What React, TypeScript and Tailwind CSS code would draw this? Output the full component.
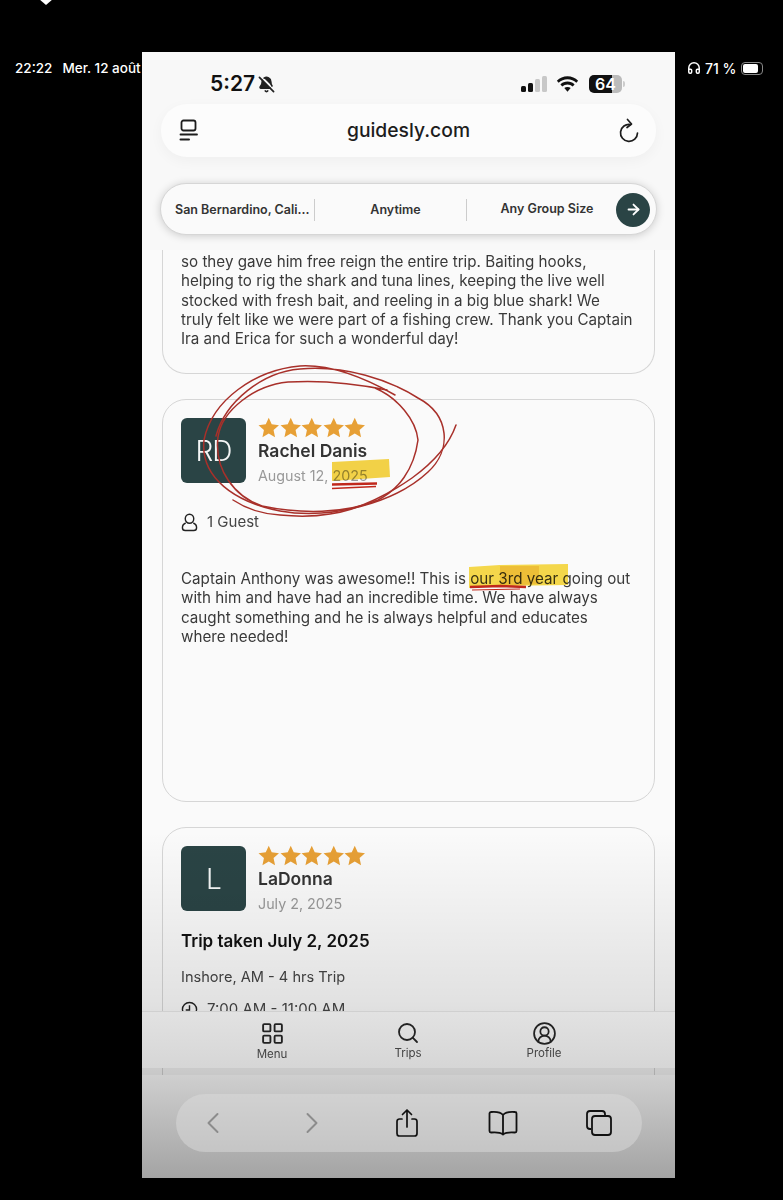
import React from "react";
import { LayoutGrid, Search, CircleUserRound, ChevronLeft, ChevronRight, ArrowRight, BellOff, Headphones } from "lucide-react";

const Star = () => (
  <svg viewBox="0 0 24 24" className="w-[21.5px] h-[21px] shrink-0" fill="#e7a036">
    <path d="M12 .8l3.4 7.6 8.3.9-6.2 5.6 1.7 8.2L12 18.9l-7.2 4.2 1.7-8.2L.3 9.3l8.3-.9z" />
  </svg>
);

const Stars = () => (
  <div className="flex h-[18px] items-center">
    {[0, 1, 2, 3, 4].map((i) => (
      <Star key={i} />
    ))}
  </div>
);

const ReviewHead = ({ initials, name, date }: { initials: string; name: string; date: string }) => (
  <div className="flex gap-[12px]">
    <div className="w-[65px] h-[65px] rounded-[6px] bg-[#2a4445] text-[#f4f6f6] text-[28px] font-light flex items-center justify-center tracking-[-1px]">
      {initials}
    </div>
    <div className="flex flex-col">
      <Stars />
      <div className="mt-[2px] h-[25px] leading-[25px] text-[17.5px] font-semibold text-[#333]">{name}</div>
      <div className="h-[25px] leading-[25px] text-[14.3px] text-[#999]">{date}</div>
    </div>
  </div>
);

const Body = "text-[15.2px] leading-[19.3px] text-[#3a3a3a]";

function Annotations() {
  return (
    <svg viewBox="142 52 533 1126" className="absolute inset-0 w-full h-full pointer-events-none" fill="none">
      <g style={{ mixBlendMode: "multiply" }}>
        <path d="M332 462 L389 459 L390 477 L332 481 Z" fill="#f7d648" />
        <path d="M469 567 L500 565 L568 564 L568 585 L500 586 L469 588 Z" fill="#f9dc4c" />
        <path d="M500 566 L539 566 L539 584 L500 586 Z" fill="#f2c238" />
      </g>
      <path d="M332 484.500 L377 483.500" stroke="#c0281c" strokeWidth="2.600" />
      <path d="M332 488.500 L376 486.500" stroke="#c0281c" strokeWidth="1.600" />
      <path d="M470 587 L500 586 L526 587" stroke="#c0281c" strokeWidth="2.600" />
      <path d="M472 590 L520 589" stroke="#c0281c" strokeWidth="1.200" />
      <g stroke="#a8302a" strokeWidth="1.500" strokeLinecap="round">
        <path d="M395 395 C372 382 335 364 300 366 C255 370 212 400 204 440 C200 478 235 502 280 511 C330 520 395 503 428 472 C452 450 450 415 418 398 C390 380 345 365 300 369 C262 372 225 402 216 436" />
        <path d="M387 390 C358 384 320 380 288 382 C255 385 222 410 218 437 C214 470 235 497 262 506 C300 514 345 514 378 500 C398 490 414 470 418 440 C416 420 398 398 375 388" />
        <path d="M233 500 C248 510 262 514 280 515 C300 517 318 516 330 514 C360 510 392 492 412 478 C430 465 448 448 456 425" />
      </g>
    </svg>
  );
}

export default function App() {
  return (
    <div className="relative w-[783px] h-[1200px] bg-black overflow-hidden pt-[52px] pl-[142px]" style={{ fontFamily: "Inter, 'Liberation Sans', sans-serif" }}>
      {/* tablet status bar, behind the recording */}
      <div className="absolute left-[15px] top-[60px] h-4 flex items-center gap-[10px] text-white text-[13.5px] font-medium whitespace-nowrap">
        <span>22:22</span>
        <span>Mer. 12 août</span>
      </div>
      <div className="absolute left-[678px] top-[60px] h-4 flex items-center text-white text-[14px] font-medium whitespace-nowrap">
        <Headphones size={14} strokeWidth={2.500} className="ml-[9px]" />
        <span className="ml-[4px]">71 %</span>
        <span className="ml-[5px] w-[22px] h-[13px] rounded-[4px] border border-[#888] p-[1px] flex">
          <span className="w-[15px] rounded-[2px] bg-white" />
        </span>
      </div>
      <svg viewBox="0 0 14 6" className="absolute left-[40px] top-0 w-[12px] h-[5px]" fill="#fff">
        <path d="M0 0H14L7 6Z" />
      </svg>

      <div className="relative z-10 w-[533px] h-[1126px] bg-[#fafafa] overflow-hidden">
        {/* header */}
        <div className="relative z-10 h-[198px] bg-[#f8f8f8] px-[19px] flex flex-col">
          <div className="h-[32px] flex items-center pt-[32px] pl-[49px] pr-[31px] justify-between">
            <div className="flex items-center gap-[3px]">
              <span className="text-[21px] font-semibold text-[#111]">5:27</span>
              <BellOff size={17} strokeWidth={2.400} fill="#222" className="text-[#222]" />
            </div>
            <div className="flex items-center">
              <svg viewBox="0 0 27 18" className="w-[27px] h-[18px]">
                <rect x="0" y="11" width="5" height="6" rx="1.500" fill="#111" />
                <rect x="7" y="8" width="5" height="9" rx="1.500" fill="#111" />
                <rect x="14" y="4" width="5" height="13" rx="1.500" fill="#c8c8c8" />
                <rect x="21" y="1" width="5" height="16" rx="1.500" fill="#c8c8c8" />
              </svg>
              <svg viewBox="0 0 24 18" className="w-[23px] h-[18px] ml-[8px]" fill="#111">
                <path d="M12 4c3.600 0 6.800 1.400 9.200 3.700l1.900-2.100C20.200 2.800 16.300 1 12 1S3.800 2.800.9 5.600l1.900 2.100C5.200 5.400 8.400 4 12 4z" />
                <path d="M12 9.500c2.100 0 4 .8 5.400 2.100l2-2.200C17.400 7.600 14.800 6.500 12 6.500S6.600 7.600 4.600 9.400l2 2.200C8 10.300 9.900 9.500 12 9.500z" />
                <path d="M12 12c-1.300 0-2.400.5-3.300 1.300L12 17l3.300-3.700C14.400 12.500 13.300 12 12 12z" />
              </svg>
              <div className="ml-[10px] relative w-[36px] h-[18px] flex items-center">
                <div className="w-[33px] h-[18px] rounded-[5px] overflow-hidden flex">
                  <div className="w-[23px] bg-[#111]" />
                  <div className="w-[10px] bg-[#bbb]" />
                </div>
                <span className="absolute left-0 w-[33px] text-center text-white text-[16px] leading-[18px] font-semibold">64</span>
                <div className="w-[2px] h-[6px] rounded-r-full bg-[#ccc] ml-[1px]" />
              </div>
            </div>
          </div>

          <div className="mt-[20px] h-[53px] rounded-[26px] bg-[#fcfcfc] shadow-[0_4px_14px_rgba(0,0,0,0.04)] flex items-center justify-between pl-[18px] pr-[16px]">
            <svg viewBox="0 0 20 24" className="w-[20px] h-[24px]" fill="none" stroke="#1c1c1c" strokeWidth="1.800" strokeLinecap="round">
              <rect x="2.500" y="1.500" width="14" height="10" rx="2" />
              <path d="M1.500 15.500H18" />
              <path d="M1.500 20.500H10" strokeWidth="2" />
            </svg>
            <span className="text-[19.3px] font-medium text-[#1d1d1d]">guidesly.com</span>
            <svg viewBox="0 0 22 26" className="w-[22px] h-[26px]" fill="none" stroke="#1c1c1c" strokeWidth="1.700" strokeLinecap="round" strokeLinejoin="round">
              <path d="M12.500 6.500A8.500 8.500 0 1 0 19.500 15" />
              <path d="M9.500 1.500L13.500 6l-4.500 3.500" />
            </svg>
          </div>

          <div className="mt-[26px] -mx-[1px] h-[52px] rounded-[26px] bg-[#fafafa] border border-[#d6d6d6] shadow-[0_1px_8px_rgba(0,0,0,0.18)] flex items-center pl-[14px] pr-[6px] pt-[1px] text-[#333] text-[12.5px] font-semibold whitespace-nowrap">
            <span className="w-[140px] border-r border-[#ccc] h-[22px] leading-[22px]">San Bernardino, Cali...</span>
            <span className="w-[152px] border-r border-[#ccc] h-[22px] leading-[22px] text-center pl-[10px]">Anytime</span>
            <span className="flex-1 text-center pl-[15px]">Any Group Size</span>
            <span className="w-[34px] h-[34px] rounded-full bg-[#2a4445] flex items-center justify-center ml-[4px]">
              <ArrowRight size={17} strokeWidth={2.600} className="text-white" />
            </span>
          </div>
        </div>

        {/* reviews */}
        <div className="px-[20px] flex flex-col gap-[25px] -mt-[1px]">
          <div className="h-[125px] rounded-b-[24px] border-x-[1.5px] border-b-[1.5px] border-[#d6d6d6] px-[18px] pt-[3px]">
            <p className={Body}>
              so they gave him free reign the entire trip. Baiting hooks,
              <br />
              helping to rig the shark and tuna lines, keeping the live well
              <br />
              stocked with fresh bait, and reeling in a big blue shark! We
              <br />
              truly felt like we were part of a fishing crew. Thank you Captain
              <br />
              Ira and Erica for such a wonderful day!
            </p>
          </div>

          <div className="h-[403px] rounded-[24px] border-[1.5px] border-[#d6d6d6] px-[18px] pt-[18px]">
            <ReviewHead initials="RD" name="Rachel Danis" date="August 12, 2025" />
            <div className="mt-[24px] h-[20px] flex items-center gap-[9px] text-[15px] text-[#444]">
              <svg viewBox="0 0 18 20" className="w-[17px] h-[19px]" fill="none" stroke="#222" strokeWidth="1.500">
                <ellipse cx="9" cy="6" rx="4.500" ry="4.800" />
                <path d="M5 10.500C2.500 11.500 1.500 13.500 1.500 15.500 1.500 17.500 2.800 18.500 4.500 18.500H13.500C15.200 18.500 16.500 17.500 16.500 15.500 16.500 13.500 15.500 11.500 13 10.500" />
              </svg>
              <span>1 Guest</span>
            </div>
            <p className={`${Body} mt-[37px]`}>
              Captain Anthony was awesome!! This is our 3rd year going out
              <br />
              with him and have had an incredible time. We have always
              <br />
              caught something and he is always helpful and educates
              <br />
              where needed!
            </p>
          </div>

          <div className="h-[400px] rounded-t-[24px] border-[1.5px] border-[#d6d6d6] px-[18px] pt-[18px]">
            <ReviewHead initials="L" name="LaDonna" date="July 2, 2025" />
            <div className="mt-[12px] text-[17px] leading-[26px] font-semibold text-[#111]">Trip taken July 2, 2025</div>
            <div className="mt-[13px] text-[14.6px] leading-[20px] text-[#444]">Inshore, AM - 4 hrs Trip</div>
            <div className="mt-[12px] h-[20px] flex items-center gap-[9px] text-[15px] text-[#444]">
              <svg viewBox="0 0 18 18" className="w-[17px] h-[17px]" fill="none" stroke="#222" strokeWidth="1.500">
                <circle cx="9" cy="9" r="7.500" />
                <path d="M9 4.500V9.500H5" />
              </svg>
              <span>7:00 AM - 11:00 AM</span>
            </div>
          </div>
        </div>

        <Annotations />

        {/* fade that darkens the bottom of the page */}
        <div className="absolute inset-x-0 top-[780px] bottom-0 bg-gradient-to-b from-black/0 via-black/10 to-black/35 pointer-events-none" />

        {/* site tab bar */}
        <div className="absolute left-0 right-0 top-[959px] h-[57px] border-t border-[#d0d0d0] text-[11.5px] text-[#444] bg-gradient-to-b from-[#e2e2e2] to-[#d6d6d6]">
          <div className="flex w-full pl-[106px] pt-[9px]">
            <div className="w-[48px] flex flex-col items-center">
              <LayoutGrid size={25} strokeWidth={1.800} className="text-[#222]" />
              <span className="mt-[1px] leading-[14px]">Menu</span>
            </div>
            <div className="w-[48px] ml-[88px] flex flex-col items-center">
              <Search size={24} strokeWidth={1.800} className="text-[#222]" />
              <span className="mt-[1px] leading-[15px]">Trips</span>
            </div>
            <div className="w-[48px] ml-[88px] flex flex-col items-center">
              <CircleUserRound size={25} strokeWidth={1.700} className="text-[#222]" />
              <span className="leading-[15px]">Profile</span>
            </div>
          </div>
        </div>

        {/* browser toolbar */}
        <div className="absolute left-0 right-0 bottom-0 h-[103px] bg-gradient-to-b from-[#cfcfcf] to-[#a4a4a4] flex items-start justify-center pt-[19px]">
          <div className="w-[466px] h-[58px] rounded-[29px] bg-[#dcdcdc]/50 flex items-center pl-[24px] text-[#222]">
            <ChevronLeft size={36} strokeWidth={1.300} className="text-[#8c8c8c] -ml-[5px]" />
            <ChevronRight size={36} strokeWidth={1.300} className="text-[#8c8c8c] ml-[63px]" />
            <svg viewBox="0 0 24 30" className="w-[24px] h-[30px] ml-[65px]" fill="none" stroke="#111" strokeWidth="1.700" strokeLinecap="round" strokeLinejoin="round">
              <path d="M7 11H4.500C3 11 2 12 2 13.500V25.500C2 27 3 28 4.500 28H19.500C21 28 22 27 22 25.500V13.500C22 12 21 11 19.500 11H17" />
              <path d="M12 19V2M7.500 6.500L12 2L16.500 6.500" />
            </svg>
            <svg viewBox="0 0 30 26" className="w-[30px] h-[26px] ml-[69px]" fill="none" stroke="#111" strokeWidth="1.800" strokeLinecap="round" strokeLinejoin="round">
              <path d="M15 5C13 2.500 9 1.500 3 2C2 2 1.500 2.800 1.500 3.500V21C1.500 22 2.200 22.500 3 22.500C8 22 12.500 22.500 15 24.500C17.500 22.500 22 22 27 22.500C27.800 22.500 28.500 22 28.500 21V3.500C28.500 2.800 28 2 27 2C21 1.500 17 2.500 15 5ZM15 5V24" />
            </svg>
            <svg viewBox="0 0 28 28" className="w-[28px] h-[28px] ml-[67px]" fill="none" stroke="#111" strokeWidth="1.800" strokeLinejoin="round">
              <path d="M6 20H5C3 20 2 19 2 17V5C2 3 3 2 5 2H17C19 2 20 3 20 5V6" />
              <rect x="7" y="7" width="19" height="19" rx="3" />
            </svg>
          </div>
        </div>
      </div>
    </div>
  );
}
